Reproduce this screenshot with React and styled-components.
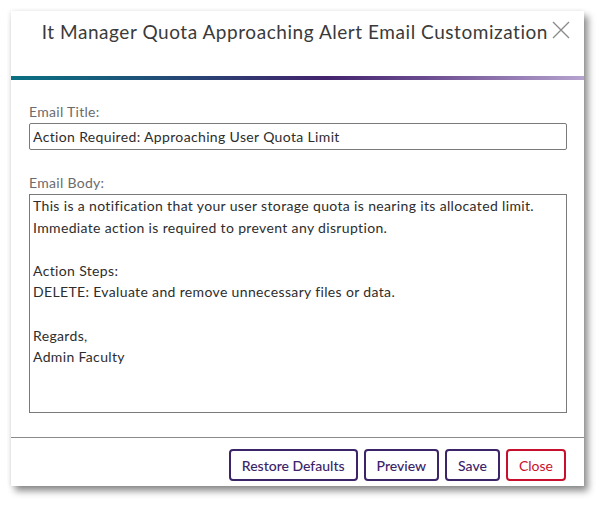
import React, { useState } from 'react';
import styled, { createGlobalStyle } from 'styled-components';

const GlobalStyle = createGlobalStyle`
  html, body {
    margin: 0;
    padding: 0;
    background: #ffffff;
  }
  body {
    font-family: "Lato", "Open Sans", sans-serif;
  }
`;

const Page = styled.div`
  width: 603px;
  height: 505px;
  padding: 11px 0 0 11px;
  box-sizing: border-box;
`;

const Dialog = styled.div`
  width: 573px;
  height: 475px;
  background: #ffffff;
  display: flex;
  flex-direction: column;
  box-shadow: 4px 5px 7px rgba(0, 0, 0, 0.45), -1px 0 4px rgba(0, 0, 0, 0.08);
`;

const Header = styled.div`
  height: 65px;
  display: flex;
  align-items: flex-start;
  justify-content: flex-end;
  gap: 4px;
  padding: 9px 14px 0 30px;
  box-sizing: border-box;
`;

const Title = styled.h2`
  margin: 0;
  font-size: 19px;
  font-weight: 400;
  letter-spacing: 0.55px;
  color: #3a3a3a;
  line-height: 24px;
  white-space: nowrap;
`;

const CloseIcon = styled.button`
  border: none;
  background: none;
  padding: 0;
  margin-top: 1px;
  width: 18px;
  height: 18px;
  cursor: pointer;
  display: flex;
`;

const GradientBar = styled.div`
  height: 4px;
  background: linear-gradient(90deg, #0a6f82 0%, #13627e 12%, #2b3f72 35%, #43236d 55%, #6a4a8f 72%, #b6a3cf 100%);
`;

const Body = styled.div`
  flex: 1;
  padding: 23px 17px 0 18px;
  display: flex;
  flex-direction: column;
`;

const Field = styled.div`
  display: flex;
  flex-direction: column;
  margin-bottom: ${(p) => p.$gap || 0}px;
`;

const Label = styled.label`
  font-size: 14px;
  color: #6b6b6b;
  letter-spacing: 0.3px;
  line-height: 18px;
  margin-bottom: 2px;
`;

const TextInput = styled.input`
  height: 27px;
  box-sizing: border-box;
  border: 1px solid #7a7a7a;
  border-radius: 2px;
  padding: 0 3px;
  font-family: inherit;
  font-size: 14px;
  letter-spacing: 0.35px;
  color: #2d2d2d;
  outline: none;
`;

const TextArea = styled.textarea`
  height: 219px;
  box-sizing: border-box;
  border: 1px solid #7a7a7a;
  border-radius: 0;
  padding: 0 3px;
  font-family: inherit;
  font-size: 14px;
  letter-spacing: 0.35px;
  line-height: 21.6px;
  color: #2d2d2d;
  resize: none;
  outline: none;
`;

const Footer = styled.div`
  height: 49px;
  border-top: 1px solid #8a8a8a;
  display: flex;
  justify-content: flex-end;
  align-items: flex-start;
  gap: 6px;
  padding: 11px 18px 0 0;
  box-sizing: border-box;
`;

const Button = styled.button`
  height: 32px;
  padding: 0 11px;
  background: #ffffff;
  border: 2px solid ${(p) => (p.$danger ? '#c8102e' : '#3b2468')};
  border-radius: 4px;
  color: ${(p) => (p.$danger ? '#c8102e' : '#3b2468')};
  font-family: inherit;
  font-size: 14px;
  font-weight: ${(p) => (p.$danger ? 400 : 500)};
  cursor: pointer;
`;

const defaultTitle = 'Action Required: Approaching User Quota Limit';

const defaultBody = `This is a notification that your user storage quota is nearing its allocated limit.
Immediate action is required to prevent any disruption.

Action Steps:
DELETE: Evaluate and remove unnecessary files or data.

Regards,
Admin Faculty`;

function App() {
  const [title, setTitle] = useState(defaultTitle);
  const [body, setBody] = useState(defaultBody);

  return (
    <>
      <GlobalStyle />
      <Page>
        <Dialog>
          <Header>
            <Title>It Manager Quota Approaching Alert Email Customization</Title>
            <CloseIcon aria-label="Close">
              <svg width="18" height="18" viewBox="0 0 18 18">
                <path d="M1 1 L17 17 M17 1 L1 17" stroke="#8a8a8a" strokeWidth="1.3" fill="none" />
              </svg>
            </CloseIcon>
          </Header>
          <GradientBar />
          <Body>
            <Field $gap={24}>
              <Label>Email Title:</Label>
              <TextInput value={title} onChange={(e) => setTitle(e.target.value)} />
            </Field>
            <Field>
              <Label>Email Body:</Label>
              <TextArea value={body} onChange={(e) => setBody(e.target.value)} />
            </Field>
          </Body>
          <Footer>
            <Button onClick={() => { setTitle(defaultTitle); setBody(defaultBody); }}>
              Restore Defaults
            </Button>
            <Button>Preview</Button>
            <Button>Save</Button>
            <Button $danger>Close</Button>
          </Footer>
        </Dialog>
      </Page>
    </>
  );
}

export default App;
